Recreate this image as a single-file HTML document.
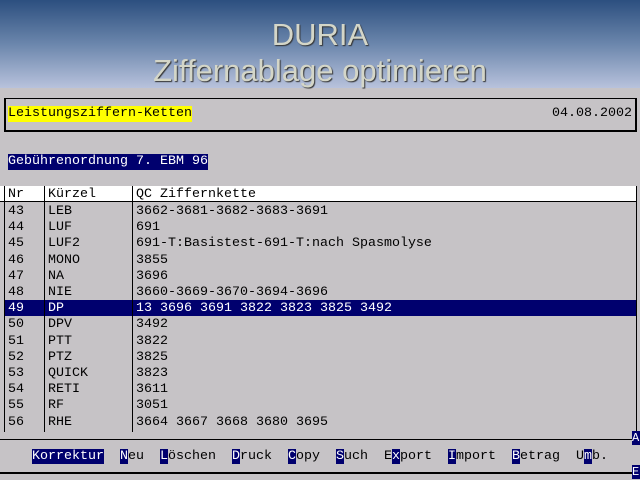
<!DOCTYPE html>
<html><head><meta charset="utf-8"><style>
*{margin:0;padding:0;box-sizing:border-box}
body{width:640px;height:480px;overflow:hidden;background:#c6c3c6;position:relative;font-family:"Liberation Mono",monospace;font-size:13.33px;line-height:16px;color:#000}
.hdr{position:absolute;left:0;top:0;width:640px;height:88px;background:linear-gradient(180deg,#2c4f7f 0%,#6b86ac 50%,#b8c2dc 100%)}
.t{position:absolute;left:0;width:640px;text-align:center;font-family:"Liberation Sans",sans-serif;color:#d4d6c8;text-shadow:1px 1px 1px #333}
.a{position:absolute;white-space:pre}
.box{position:absolute;left:4px;top:98px;width:633px;height:34px;border:2px solid #000;border-top-width:1px}
.vl{position:absolute;width:1px;background:#000}
.hl{background:#00006e;color:#fff}
</style></head><body>
<div class="hdr"></div>
<div class="t" style="top:17px;font-size:31px;line-height:36px">DURIA</div>
<div class="t" style="top:53px;font-size:31px;line-height:36px">Ziffernablage optimieren</div>
<div class="box"></div>
<div class="a" style="left:8px;top:106px;background:#ffff00">Leistungsziffern-Ketten</div>
<div class="a" style="left:552px;top:106px">04.08.2002</div>
<div class="a hl" style="left:8px;top:154px">Gebührenordnung 7. EBM 96</div>
<div style="position:absolute;left:0;top:186px;width:637px;height:16px;background:#fff;border-bottom:1px solid #000"></div>
<div class="a" style="left:8px;top:187px">Nr</div>
<div class="a" style="left:48px;top:187px">Kürzel</div>
<div class="a" style="left:136px;top:187px">QC Ziffernkette</div>
<div style="position:absolute;left:4px;top:300px;width:633px;height:16px;background:#00006e"></div>
<div class="vl" style="left:4px;top:186px;height:246px"></div>
<div class="vl" style="left:44px;top:186px;height:246px"></div>
<div class="vl" style="left:132px;top:186px;height:246px"></div>
<div class="vl" style="left:636px;top:186px;height:246px"></div>
<div style="position:absolute;left:0;top:439px;width:632px;height:1px;background:#000"></div>
<div style="position:absolute;left:0;top:472px;width:632px;height:2px;background:#000"></div>
<div class="a hl" style="left:632px;top:431px;width:8px;height:14px;line-height:14px;font-size:12px">A</div>
<div class="a hl" style="left:632px;top:465px;width:8px;height:14px;line-height:14px;font-size:12px">E</div>
<div class="a" style="left:32px;top:449px"><span class="hl">Korrektur</span>  <span class="hl">N</span>eu  <span class="hl">L</span>öschen  <span class="hl">D</span>ruck  <span class="hl">C</span>opy  <span class="hl">S</span>uch  E<span class="hl">x</span>port  <span class="hl">I</span>mport  <span class="hl">B</span>etrag  U<span class="hl">m</span>b.</div>
<div class="a" style="left:8px;top:204px;line-height:16.2px">43
44
45
46
47
48
<span style="color:#fff">49</span>
50
51
52
53
54
55
56</div>
<div class="a" style="left:48px;top:204px;line-height:16.2px">LEB
LUF
LUF2
MONO
NA
NIE
<span style="color:#fff">DP</span>
DPV
PTT
PTZ
QUICK
RETI
RF
RHE</div>
<div class="a" style="left:136px;top:204px;line-height:16.2px">3662-3681-3682-3683-3691
691
691-T:Basistest-691-T:nach Spasmolyse
3855
3696
3660-3669-3670-3694-3696
<span style="color:#fff">13 3696 3691 3822 3823 3825 3492</span>
3492
3822
3825
3823
3611
3051
3664 3667 3668 3680 3695</div>
</body></html>
